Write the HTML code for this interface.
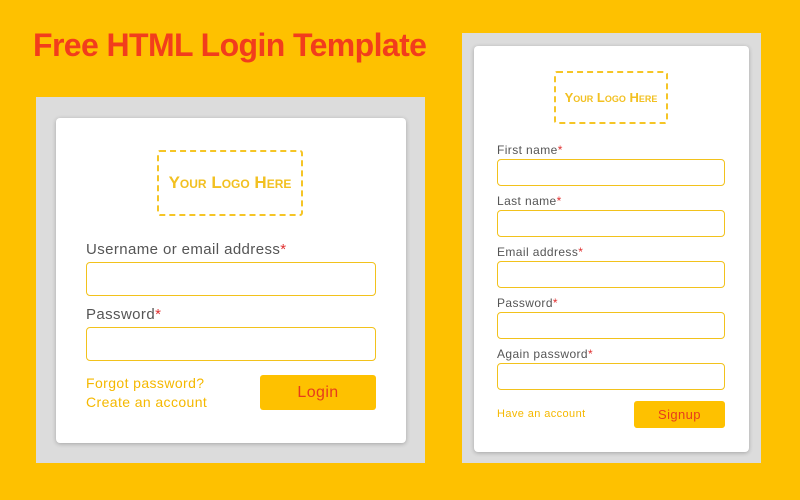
<!DOCTYPE html>
<html><head><style>
*{margin:0;padding:0;box-sizing:border-box}
body{width:800px;height:500px;background:#fec100;position:relative;overflow:hidden;font-family:"Liberation Sans",Arial,sans-serif}
.a{position:absolute}
h1{position:absolute;left:33px;top:27px;font-size:32px;font-weight:bold;color:#f23d1c;letter-spacing:-0.6px;white-space:nowrap}
.gray{background:#dcdcdc}
.card{background:#fff;border-radius:4px;box-shadow:0 1px 4px rgba(0,0,0,.25)}
.logo{border:2px dashed #f5c526;border-radius:3px;color:#f2c021;font-weight:bold;display:flex;align-items:center;justify-content:center;font-variant:small-caps;font-family:"Liberation Sans",sans-serif}
.lbl{color:#555;white-space:nowrap;letter-spacing:0.4px}
.lbl b{color:#e03030;font-weight:normal}
.inp{border:1px solid #f2c21c;border-radius:4px;background:#fff}
.btn{background:#fec100;border-radius:3px;color:#e63c1c;display:flex;align-items:center;justify-content:center;letter-spacing:0.4px}
.lnk{color:#f5b800;white-space:nowrap;letter-spacing:0.4px}
</style></head><body>
<h1>Free HTML Login Template</h1>
<div class="a gray" style="left:36px;top:97px;width:389px;height:366px"></div>
<div class="a card" style="left:56px;top:118px;width:350px;height:325px"></div>
<div class="a logo" style="left:157px;top:150px;width:146px;height:66px;font-size:17px">Your Logo Here</div>
<div class="a lbl" style="left:86px;top:241px;font-size:15px">Username or email address<b>*</b></div>
<div class="a inp" style="left:86px;top:262px;width:290px;height:34px"></div>
<div class="a lbl" style="left:86px;top:306px;font-size:15px">Password<b>*</b></div>
<div class="a inp" style="left:86px;top:327px;width:290px;height:34px"></div>
<div class="a lnk" style="left:86px;top:375px;font-size:14px">Forgot password?</div>
<div class="a lnk" style="left:86px;top:394px;font-size:14px">Create an account</div>
<div class="a btn" style="left:260px;top:375px;width:116px;height:35px;font-size:16px">Login</div>

<div class="a gray" style="left:462px;top:33px;width:299px;height:430px"></div>
<div class="a card" style="left:474px;top:46px;width:275px;height:406px"></div>
<div class="a logo" style="left:554px;top:71px;width:114px;height:53px;font-size:13px">Your Logo Here</div>
<div class="a lbl" style="left:497px;top:143px;font-size:12px">First name<b>*</b></div>
<div class="a inp" style="left:497px;top:159px;width:228px;height:27px"></div>
<div class="a lbl" style="left:497px;top:194px;font-size:12px">Last name<b>*</b></div>
<div class="a inp" style="left:497px;top:210px;width:228px;height:27px"></div>
<div class="a lbl" style="left:497px;top:245px;font-size:12px">Email address<b>*</b></div>
<div class="a inp" style="left:497px;top:261px;width:228px;height:27px"></div>
<div class="a lbl" style="left:497px;top:296px;font-size:12px">Password<b>*</b></div>
<div class="a inp" style="left:497px;top:312px;width:228px;height:27px"></div>
<div class="a lbl" style="left:497px;top:347px;font-size:12px">Again password<b>*</b></div>
<div class="a inp" style="left:497px;top:363px;width:228px;height:27px"></div>
<div class="a lnk" style="left:497px;top:408px;font-size:11px">Have an account</div>
<div class="a btn" style="left:634px;top:401px;width:91px;height:27px;font-size:13px">Signup</div>
</body></html>
